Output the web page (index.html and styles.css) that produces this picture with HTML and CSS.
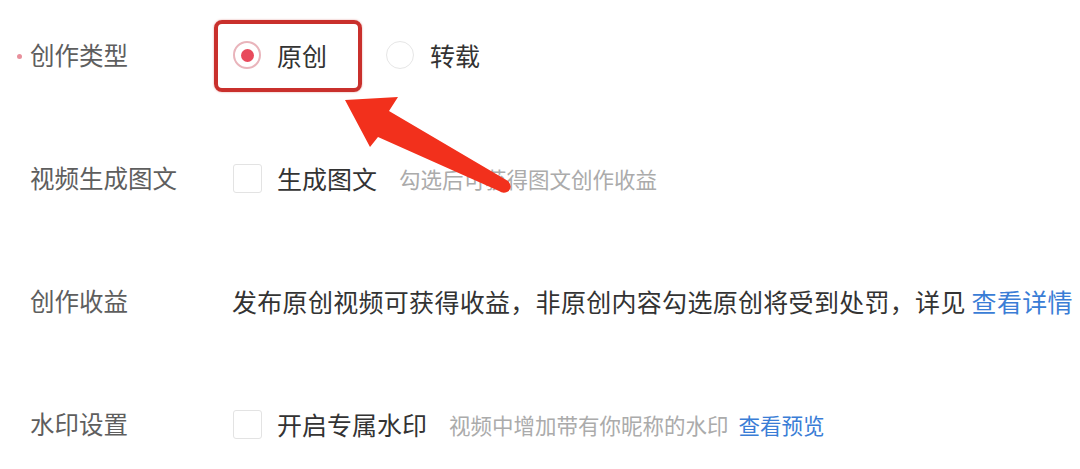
FILE: index.html
```html
<!DOCTYPE html>
<html lang="zh-CN">
<head>
<meta charset="utf-8">
<title>发布设置</title>
<link rel="stylesheet" href="styles.css">
</head>
<body>
<div class="form">
  <div class="row">
    <div class="label"><span class="req"></span>创作类型</div>
    <div class="control">
      <div class="radio-wrap">
        <span class="highlight"></span>
        <span class="radio checked"><span class="dot"></span></span>
        <span class="opt-text">原创</span>
      </div>
      <div class="radio-wrap second">
        <span class="radio"></span>
        <span class="opt-text">转载</span>
      </div>
    </div>
  </div>
  <div class="row">
    <div class="label">视频生成图文</div>
    <div class="control">
      <span class="checkbox"></span>
      <span class="opt-text">生成图文</span>
      <span class="hint">勾选后可获得图文创作收益</span>
    </div>
  </div>
  <div class="row">
    <div class="label">创作收益</div>
    <div class="control">
      <span class="text">发布原创视频可获得收益，非原创内容勾选原创将受到处罚，详见 <a class="link">查看详情</a></span>
    </div>
  </div>
  <div class="row">
    <div class="label">水印设置</div>
    <div class="control">
      <span class="checkbox"></span>
      <span class="opt-text">开启专属水印</span>
      <span class="hint">视频中增加带有你昵称的水印<a class="link small">查看预览</a></span>
    </div>
  </div>
</div>
<svg class="arrow" width="1080" height="469" viewBox="0 0 1080 469">
  <path d="M345 100 L398 97 L389 111 L508 181 Q514 188 507 192 Q503 194 499 191 L378 137 L370 147 Z" fill="#f2301c"/>
</svg>
</body>
</html>
```

FILE: styles.css
```css
html, body {
  margin: 0;
  padding: 0;
  background: #ffffff;
}
body {
  width: 1080px;
  height: 469px;
  overflow: hidden;
  position: relative;
  font-family: "Noto Sans CJK SC", "Noto Sans", sans-serif;
}
.form {
  display: flex;
  flex-direction: column;
  gap: 73px;
  padding-top: 30px;
}
.row {
  display: flex;
  align-items: center;
  height: 50px;
}
.label {
  position: relative;
  width: 232px;
  padding-left: 30px;
  box-sizing: border-box;
  flex: none;
  font-size: 24.5px;
  color: #5e5e5e;
  line-height: 50px;
}
.req {
  position: absolute;
  left: 17px;
  top: 24px;
  width: 5px;
  height: 5px;
  border-radius: 50%;
  background: #e8909c;
}
.control {
  display: flex;
  align-items: center;
  font-size: 25px;
  color: #333;
}
.radio-wrap {
  position: relative;
  display: flex;
  align-items: center;
  gap: 16px;
}
.radio-wrap.second {
  margin-left: 58px;
}
.radio {
  box-sizing: border-box;
  width: 28px;
  height: 28px;
  border-radius: 50%;
  border: 1.5px solid #e6e6e6;
  display: flex;
  align-items: center;
  justify-content: center;
  margin-left: 1px;
}
.radio.checked {
  border: 2px solid #e9b4bb;
}
.dot {
  width: 13px;
  height: 13px;
  border-radius: 50%;
  background: #e84a5c;
}
.opt-text {
  color: #333;
  line-height: 50px;
}
.highlight {
  position: absolute;
  left: -18px;
  top: -10px;
  width: 148px;
  height: 72px;
  box-sizing: border-box;
  border: 4px solid #c9302c;
  border-radius: 8px;
  box-shadow: 0 0 2px rgba(201, 48, 44, 0.5);
}
.checkbox {
  box-sizing: border-box;
  width: 29px;
  height: 29px;
  border: 1.5px solid #e3e3e3;
  border-radius: 3px;
  margin-left: 1px;
  margin-right: 15px;
}
.hint {
  margin-left: 22px;
  font-size: 21.5px;
  color: #ababab;
}
.text {
  color: #333;
  letter-spacing: 0.3px;
}
.link {
  color: #3a7dd6;
}
.link.small {
  font-size: 21.5px;
  margin-left: 10px;
}
.arrow {
  position: absolute;
  left: 0;
  top: 0;
  pointer-events: none;
}
```
